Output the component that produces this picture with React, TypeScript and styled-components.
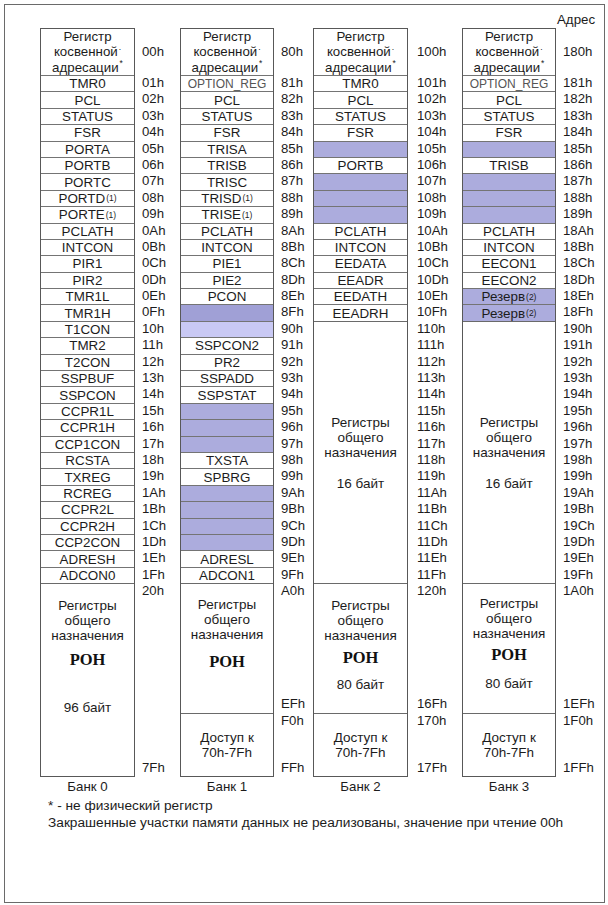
import React from "react";
import styled, { createGlobalStyle } from "styled-components";

const GlobalStyle = createGlobalStyle`
  html, body {
    margin: 0;
    padding: 0;
    background: #ffffff;
  }
  body {
    font-family: "Liberation Sans", Arial, sans-serif;
    color: #1c1c1c;
  }
`;

const ROW = 16.4;
const BOX_H = 749;

const Frame = styled.div`
  box-sizing: border-box;
  margin: 4px 0 0 4px;
  width: 601px;
  height: 899px;
  border: 1px solid #6a6a6a;
  padding-left: 35px;
  display: flex;
  flex-direction: column;
`;

const TopRow = styled.div`
  height: 23px;
  display: flex;
  align-items: flex-end;
  padding-left: 517px;
  font-size: 13.3px;
  line-height: 16px;
`;

const BankRow = styled.div`
  display: flex;
  align-items: flex-start;
`;

const Bank = styled.div`
  display: flex;
  flex-direction: column;
`;

const BankBody = styled.div`
  display: flex;
`;

const Box = styled.div<{ $w: number }>`
  box-sizing: border-box;
  width: ${(p) => p.$w}px;
  height: ${BOX_H}px;
  border: 1px solid #585858;
  display: flex;
  flex-direction: column;
`;

const AddrCol = styled.div<{ $w: number; $pad: number }>`
  box-sizing: border-box;
  width: ${(p) => p.$w}px;
  height: ${BOX_H}px;
  padding: 1px 0 1px ${(p) => p.$pad}px;
  display: flex;
  flex-direction: column;
  font-size: 13.2px;
`;

const shades = {
  none: "#ffffff",
  normal: "#acacdd",
  dark: "#a0a0d6",
  light: "#c9c9f4",
};

type Shade = keyof typeof shades;

const HeadCell = styled.div`
  box-sizing: border-box;
  height: 46px;
  display: flex;
  flex-direction: column;
  align-items: center;
  justify-content: center;
  font-size: 13.3px;
  line-height: 15.5px;
  text-align: center;
`;

const RegCell = styled.div<{ $shade: Shade }>`
  box-sizing: border-box;
  height: ${ROW}px;
  border-top: 1px solid #747474;
  background: ${(p) => shades[p.$shade]};
  display: flex;
  align-items: center;
  justify-content: center;
  font-size: 13.4px;
  white-space: nowrap;
`;

const Light = styled.span`
  font-size: 12px;
  color: #555555;
`;

const Sup = styled.sup`
  font-size: 8.5px;
  line-height: 0;
  vertical-align: 6px;
  margin-left: 1px;
`;

const Block = styled.div<{ $h?: number; $pad?: number; $center?: boolean }>`
  box-sizing: border-box;
  ${(p) => (p.$h ? `height: ${p.$h}px;` : "flex: 1;")}
  border-top: 1px solid #6a6a6a;
  padding-top: ${(p) => p.$pad ?? 0}px;
  display: flex;
  flex-direction: column;
  align-items: center;
  justify-content: ${(p) => (p.$center ? "center" : "flex-start")};
  font-size: 13.5px;
  line-height: 15px;
  text-align: center;
`;

const Ron = styled.div<{ $gap: number }>`
  margin-top: ${(p) => p.$gap}px;
  font-family: "Liberation Serif", "Times New Roman", serif;
  font-weight: bold;
  font-size: 16.5px;
  line-height: 17px;
  color: #111111;
`;

const Gap = styled.div<{ $gap: number }>`
  margin-top: ${(p) => p.$gap}px;
`;

const AddrSeg = styled.div<{ $h?: number; $single?: boolean }>`
  box-sizing: border-box;
  ${(p) => (p.$h ? `height: ${p.$h}px;` : "flex: 1;")}
  display: flex;
  flex-direction: column;
  justify-content: ${(p) => (p.$single ? "center" : "space-between")};
`;

const AddrLabel = styled.div`
  height: ${ROW}px;
  line-height: ${ROW}px;
  white-space: nowrap;
`;

const BankLabel = styled.div<{ $w: number }>`
  width: ${(p) => p.$w}px;
  text-align: center;
  font-size: 13.3px;
  line-height: 16px;
  margin-top: 2px;
`;

const Notes = styled.div`
  margin-top: 3px;
  padding-left: 8px;
  font-size: 13.7px;
  line-height: 16.5px;
`;

type Reg = { name?: string; sup?: string; shade?: Shade; light?: boolean };

type BlockSeg = {
  h?: number;
  addrs: string[];
  kind: "gpr" | "access" | "small";
  pad?: number;
  ronGap?: number;
  bytes?: string;
  bytesGap?: number;
};

type BankData = {
  title: string;
  base: number;
  digits: number;
  boxW: number;
  addrW: number;
  addrPad: number;
  regs: Reg[];
  blocks: BlockSeg[];
};

const hex = (n: number, d: number) =>
  n.toString(16).toUpperCase().padStart(d, "0") + "h";

const range = (from: number, count: number, d: number) =>
  Array.from({ length: count }, (_, i) => hex(from + i, d));

const r = (name: string, sup?: string): Reg => ({ name, sup });
const empty = (shade: Shade = "normal"): Reg => ({ shade });

const banks: BankData[] = [
  {
    title: "Банк 0",
    base: 0x00,
    digits: 2,
    boxW: 95,
    addrW: 45,
    addrPad: 7,
    regs: [
      r("TMR0"), r("PCL"), r("STATUS"), r("FSR"), r("PORTA"), r("PORTB"),
      r("PORTC"), r("PORTD", "(1)"), r("PORTE", "(1)"), r("PCLATH"),
      r("INTCON"), r("PIR1"), r("PIR2"), r("TMR1L"), r("TMR1H"), r("T1CON"),
      r("TMR2"), r("T2CON"), r("SSPBUF"), r("SSPCON"), r("CCPR1L"),
      r("CCPR1H"), r("CCP1CON"), r("RCSTA"), r("TXREG"), r("RCREG"),
      r("CCPR2L"), r("CCPR2H"), r("CCP2CON"), r("ADRESH"), r("ADCON0"),
    ],
    blocks: [
      { addrs: ["20h", "7Fh"], kind: "gpr", pad: 14, ronGap: 8, bytes: "96 байт", bytesGap: 32 },
    ],
  },
  {
    title: "Банк 1",
    base: 0x80,
    digits: 2,
    boxW: 94,
    addrW: 39,
    addrPad: 7,
    regs: [
      { name: "OPTION_REG", light: true }, r("PCL"), r("STATUS"), r("FSR"),
      r("TRISA"), r("TRISB"), r("TRISC"), r("TRISD", "(1)"), r("TRISE", "(1)"),
      r("PCLATH"), r("INTCON"), r("PIE1"), r("PIE2"), r("PCON"),
      empty("dark"), empty("light"), r("SSPCON2"), r("PR2"), r("SSPADD"),
      r("SSPSTAT"), empty(), empty(), empty(), r("TXSTA"), r("SPBRG"),
      empty(), empty(), empty(), empty(), r("ADRESL"), r("ADCON1"),
    ],
    blocks: [
      { h: 129.6, addrs: ["A0h", "EFh"], kind: "gpr", pad: 13, ronGap: 11 },
      { addrs: ["F0h", "FFh"], kind: "access" },
    ],
  },
  {
    title: "Банк 2",
    base: 0x100,
    digits: 3,
    boxW: 95,
    addrW: 54,
    addrPad: 9,
    regs: [
      r("TMR0"), r("PCL"), r("STATUS"), r("FSR"), empty(), r("PORTB"),
      empty(), empty(), empty(), r("PCLATH"), r("INTCON"), r("EEDATA"),
      r("EEADR"), r("EEDATH"), r("EEADRH"),
    ],
    blocks: [
      { h: ROW * 16, addrs: range(0x110, 16, 3), kind: "small" },
      { h: 129.6, addrs: ["120h", "16Fh"], kind: "gpr", pad: 14, ronGap: 6, bytes: "80 байт", bytesGap: 11 },
      { addrs: ["170h", "17Fh"], kind: "access" },
    ],
  },
  {
    title: "Банк 3",
    base: 0x180,
    digits: 3,
    boxW: 94,
    addrW: 48,
    addrPad: 7,
    regs: [
      { name: "OPTION_REG", light: true }, r("PCL"), r("STATUS"), r("FSR"),
      empty(), r("TRISB"), empty(), empty(), empty(), r("PCLATH"),
      r("INTCON"), r("EECON1"), r("EECON2"),
      { name: "Резерв", sup: "(2)", shade: "normal" },
      { name: "Резерв", sup: "(2)", shade: "normal" },
    ],
    blocks: [
      { h: ROW * 16, addrs: range(0x190, 16, 3), kind: "small" },
      { h: 129.6, addrs: ["1A0h", "1EFh"], kind: "gpr", pad: 12, ronGap: 5, bytes: "80 байт", bytesGap: 13 },
      { addrs: ["1F0h", "1FFh"], kind: "access" },
    ],
  },
];

function BlockContent({ b }: { b: BlockSeg }) {
  if (b.kind === "access") {
    return (
      <>
        <div>Доступ к</div>
        <div>70h-7Fh</div>
      </>
    );
  }
  return (
    <>
      <div>Регистры</div>
      <div>общего</div>
      <div>назначения</div>
      {b.kind === "gpr" && <Ron $gap={b.ronGap ?? 8}>РОН</Ron>}
      {b.kind === "small" && <Gap $gap={16}>16 байт</Gap>}
      {b.bytes && <Gap $gap={b.bytesGap ?? 10}>{b.bytes}</Gap>}
    </>
  );
}

function BankView({ bank }: { bank: BankData }) {
  return (
    <Bank>
      <BankBody>
        <Box $w={bank.boxW}>
          <HeadCell>
            <div>Регистр</div>
            <div>
              косвенной<Sup>.</Sup>
            </div>
            <div>
              адресации<Sup>*</Sup>
            </div>
          </HeadCell>
          {bank.regs.map((reg, i) => (
            <RegCell key={i} $shade={reg.shade ?? "none"}>
              {reg.light ? <Light>{reg.name}</Light> : reg.name}
              {reg.sup && <Sup>{reg.sup}</Sup>}
            </RegCell>
          ))}
          {bank.blocks.map((b, i) => (
            <Block
              key={i}
              $h={b.h}
              $pad={b.pad}
              $center={b.kind !== "gpr"}
            >
              <BlockContent b={b} />
            </Block>
          ))}
        </Box>
        <AddrCol $w={bank.addrW} $pad={bank.addrPad}>
          <AddrSeg $h={46} $single>
            <AddrLabel>{hex(bank.base, bank.digits)}</AddrLabel>
          </AddrSeg>
          {bank.regs.map((_, i) => (
            <AddrSeg key={i} $h={ROW} $single>
              <AddrLabel>{hex(bank.base + i + 1, bank.digits)}</AddrLabel>
            </AddrSeg>
          ))}
          {bank.blocks.map((b, i) => (
            <AddrSeg key={"b" + i} $h={b.h}>
              {b.addrs.map((a) => (
                <AddrLabel key={a}>{a}</AddrLabel>
              ))}
            </AddrSeg>
          ))}
        </AddrCol>
      </BankBody>
      <BankLabel $w={bank.boxW}>{bank.title}</BankLabel>
    </Bank>
  );
}

export default function App() {
  return (
    <>
      <GlobalStyle />
      <Frame>
        <TopRow>Адрес</TopRow>
        <BankRow>
          {banks.map((b) => (
            <BankView key={b.title} bank={b} />
          ))}
        </BankRow>
        <Notes>
          <div>* - не физический регистр</div>
          <div>
            Закрашенные участки памяти данных не реализованы, значение при
            чтение 00h
          </div>
        </Notes>
      </Frame>
    </>
  );
}
